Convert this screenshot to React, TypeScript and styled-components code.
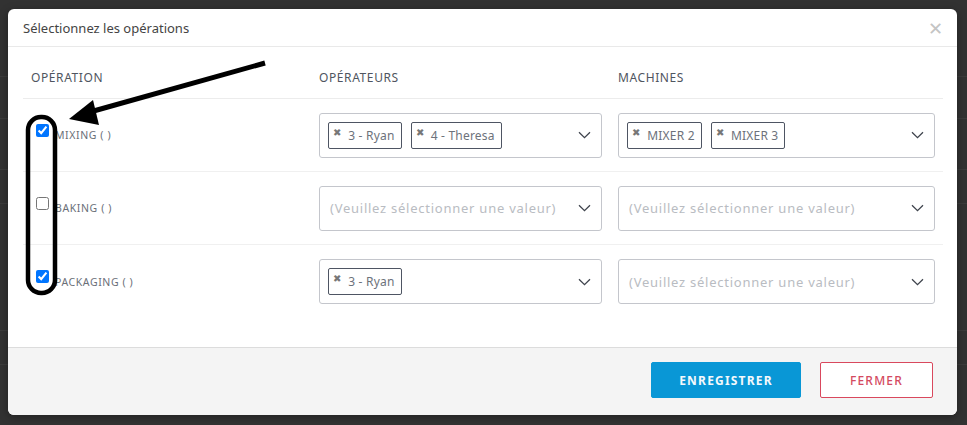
import React from "react";
import styled, { createGlobalStyle } from "styled-components";

type Operation = {
  name: string;
  checked: boolean;
  operators: string[];
  machines: string[];
};

const operations: Operation[] = [
  { name: "MIXING ( )", checked: true, operators: ["3 - Ryan", "4 - Theresa"], machines: ["MIXER 2", "MIXER 3"] },
  { name: "BAKING ( )", checked: false, operators: [], machines: [] },
  { name: "PACKAGING ( )", checked: true, operators: ["3 - Ryan"], machines: [] },
];

const GlobalStyle = createGlobalStyle`
  html, body {
    margin: 0;
    padding: 0;
    background: #323232;
    font-family: "Noto Sans", "Open Sans", sans-serif;
  }
  * {
    box-sizing: border-box;
  }
`;

const Backdrop = styled.div`
  position: relative;
  width: 967px;
  height: 425px;
  padding: 9px 10px 10px 8px;
  background-color: #323232;
  background-image: linear-gradient(#3c3c3c, #3c3c3c), linear-gradient(#3c3c3c, #3c3c3c),
    linear-gradient(#3c3c3c, #3c3c3c), linear-gradient(#3c3c3c, #3c3c3c),
    linear-gradient(#3c3c3c, #3c3c3c), linear-gradient(#3c3c3c, #3c3c3c);
  background-size: 100% 1px;
  background-repeat: no-repeat;
  background-position: 0 76px, 0 118px, 0 169px, 0 203px, 0 330px, 0 364px;
`;

const Modal = styled.div`
  display: flex;
  flex-direction: column;
  width: 949px;
  height: 406px;
  background: #fff;
  border-radius: 6px;
  overflow: hidden;
  box-shadow: 0 2px 8px rgba(0, 0, 0, 0.35);
`;

const Header = styled.div`
  display: flex;
  align-items: center;
  justify-content: space-between;
  height: 38px;
  padding: 0 14px 0 15px;
  border-bottom: 1px solid #e9e9e9;
`;

const Title = styled.h4`
  margin: 0;
  font-size: 13px;
  font-weight: 400;
  color: #444;
`;

const Close = styled.span`
  font-size: 18px;
  line-height: 1;
  color: #c4c4c4;
  font-weight: 300;
`;

const Body = styled.div`
  flex: 1;
  padding: 0 14px 0 15px;
`;

const Grid = styled.div`
  display: grid;
  grid-template-columns: 288px 299px 1fr;
`;

const HeadCell = styled.div`
  padding: 23px 8px 12px;
  font-size: 12px;
  line-height: 16px;
  letter-spacing: 0.6px;
  color: #4f5560;
  border-bottom: 1px solid #ececec;
`;

const Cell = styled.div<{ $last?: boolean }>`
  display: flex;
  align-items: center;
  height: 73px;
  padding: 0 8px;
  border-bottom: ${(p) => (p.$last ? "none" : "1px solid #f0f0f0")};
`;

const Check = styled.input`
  width: 13px;
  height: 13px;
  margin: 0 6px 10px 5px;
`;

const OpName = styled.span`
  font-size: 10.5px;
  letter-spacing: 0.6px;
  color: #6a6f78;
`;

const Select = styled.div`
  display: flex;
  align-items: center;
  gap: 9px;
  width: 100%;
  height: 45px;
  padding: 0 10px 0 8px;
  border: 1px solid #c4c6cc;
  border-radius: 3px;
`;

const Chip = styled.span`
  display: inline-flex;
  align-items: center;
  height: 27px;
  padding: 0 6px 0 4px;
  border: 1px solid #4e5563;
  border-radius: 2px;
  font-size: 12px;
  color: #6d727b;
  letter-spacing: 0.2px;
`;

const ChipX = styled.span`
  font-size: 10px;
  color: #777;
  margin-right: 7px;
  margin-top: -7px;
`;

const Placeholder = styled.span`
  padding-left: 2px;
  font-size: 13px;
  letter-spacing: 0.75px;
  color: #b9bcc2;
`;

const Chevron = styled.svg`
  margin-left: auto;
  flex-shrink: 0;
`;

const Footer = styled.div`
  display: flex;
  justify-content: flex-end;
  gap: 19px;
  height: 68px;
  padding: 14px 24px 0 0;
  background: #f4f4f4;
  border-top: 1px solid #dcdcdc;
`;

const Button = styled.button<{ $variant: "primary" | "outline" }>`
  height: 36px;
  width: ${(p) => (p.$variant === "primary" ? "150px" : "113px")};
  border-radius: 2px;
  font-family: inherit;
  font-size: 12px;
  letter-spacing: 1.2px;
  font-weight: ${(p) => (p.$variant === "primary" ? 700 : 500)};
  color: ${(p) => (p.$variant === "primary" ? "#f4f9fc" : "#d44a5f")};
  background: ${(p) => (p.$variant === "primary" ? "#0997d6" : "#fff")};
  border: 1px solid ${(p) => (p.$variant === "primary" ? "#0997d6" : "#d9485d")};
`;

const Annotation = styled.svg`
  position: absolute;
  inset: 0;
  pointer-events: none;
`;

const ChevronIcon = () => (
  <Chevron width="13" height="8" viewBox="0 0 13 8">
    <path d="M1 1.2 L6.5 6.6 L12 1.2" fill="none" stroke="#3f444d" strokeWidth="1.3" />
  </Chevron>
);

const ValueSelect: React.FC<{ values: string[] }> = ({ values }) => (
  <Select>
    {values.length === 0 && <Placeholder>(Veuillez sélectionner une valeur)</Placeholder>}
    {values.map((v) => (
      <Chip key={v}>
        <ChipX>✖</ChipX>
        {v}
      </Chip>
    ))}
    <ChevronIcon />
  </Select>
);

const App: React.FC = () => {
  return (
    <Backdrop>
      <GlobalStyle />
      <Modal>
        <Header>
          <Title>Sélectionnez les opérations</Title>
          <Close>✕</Close>
        </Header>
        <Body>
          <Grid>
            <HeadCell>OPÉRATION</HeadCell>
            <HeadCell>OPÉRATEURS</HeadCell>
            <HeadCell>MACHINES</HeadCell>
            {operations.map((op, i) => {
              const last = i === operations.length - 1;
              return (
                <React.Fragment key={op.name}>
                  <Cell $last={last}>
                    <Check type="checkbox" defaultChecked={op.checked} />
                    <OpName>{op.name}</OpName>
                  </Cell>
                  <Cell $last={last}>
                    <ValueSelect values={op.operators} />
                  </Cell>
                  <Cell $last={last}>
                    <ValueSelect values={op.machines} />
                  </Cell>
                </React.Fragment>
              );
            })}
          </Grid>
        </Body>
        <Footer>
          <Button $variant="primary">ENREGISTRER</Button>
          <Button $variant="outline">FERMER</Button>
        </Footer>
      </Modal>
      <Annotation width="967" height="425" viewBox="0 0 967 425">
        <line x1="265" y1="63" x2="90" y2="112" stroke="#000" strokeWidth="5" />
        <polygon points="69,119 93,100 99,125" fill="#000" />
        <rect x="28" y="117" width="27" height="176" rx="13" fill="none" stroke="#000" strokeWidth="4.5" />
      </Annotation>
    </Backdrop>
  );
};

export default App;
